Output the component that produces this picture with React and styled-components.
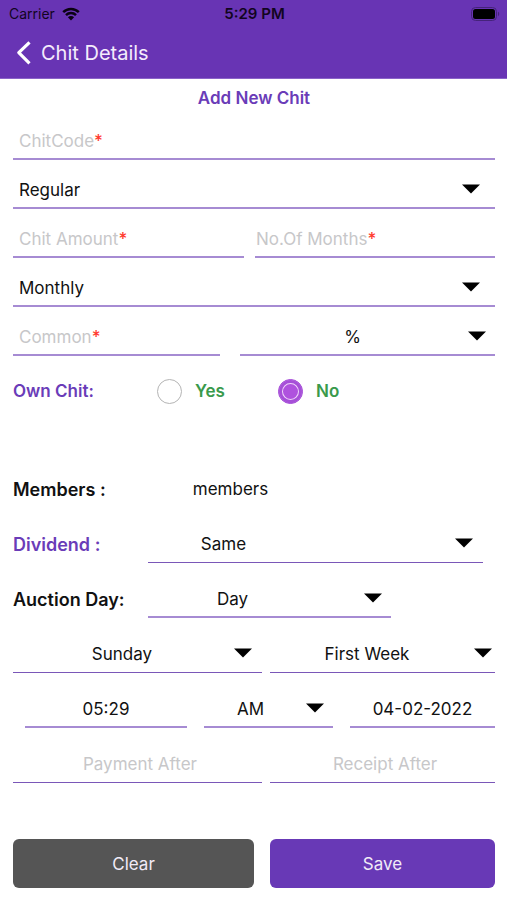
import React, { useState } from "react";
import styled, { createGlobalStyle } from "styled-components";

const initialState = {
  code: "",
  type: "Regular",
  amount: "",
  months: "",
  frequency: "Monthly",
  common: "",
  unit: "%",
  own: "No",
  members: "members",
  dividend: "Same",
  auction: "Day",
  weekday: "Sunday",
  week: "First Week",
  time: "05:29",
  meridiem: "AM",
  date: "04-02-2022",
  payment: "",
  receipt: "",
};

const options = {
  type: ["Regular", "Auction"],
  frequency: ["Monthly", "Weekly"],
  unit: ["%", "Rs"],
  dividend: ["Same", "Next"],
  auction: ["Day", "Date"],
  weekday: [
    "Sunday",
    "Monday",
    "Tuesday",
    "Wednesday",
    "Thursday",
    "Friday",
    "Saturday",
  ],
  week: ["First Week", "Second Week", "Third Week", "Fourth Week"],
  meridiem: ["AM", "PM"],
};

const RequiredInput = ({ id, label, value, onChange, inset = 6 }) => (
  <Field>
    <StyledInput
      id={id}
      name={id}
      value={value}
      onChange={onChange}
      placeholder=" "
      required
      $inset={inset}
    />
    <FloatingLabel htmlFor={id} $inset={inset}>
      {label}
      <Asterisk>*</Asterisk>
    </FloatingLabel>
  </Field>
);

const SelectField = ({ id, label, value, onChange, thin, center, space, arrow }) => (
  <Field $thin={thin}>
    <StyledSelect
      id={id}
      name={id}
      aria-label={label}
      value={value}
      onChange={onChange}
      $center={center}
      $space={space}
    >
      {options[id].map((item) => (
        <option key={item}>{item}</option>
      ))}
    </StyledSelect>
    <Arrow viewBox="0 0 18 9" $right={arrow} aria-hidden="true">
      <path d="M0 0h18L9 9z" />
    </Arrow>
  </Field>
);

export default function App() {
  const [state, setState] = useState(initialState);

  const handleChange = (e) => {
    setState({ ...state, [e.target.name]: e.target.value });
  };
  const handleClear = () => {
    setState(initialState);
  };
  const bind = (id) => ({
    id,
    name: id,
    value: state[id],
    onChange: handleChange,
  });

  return (
    <>
      <GlobalStyle />
      <StyledHeader>
        <StatusBar>
          <Carrier>
            Carrier
            <WifiIcon viewBox="0 0 18 14" aria-hidden="true">
              <path d="M1.2 5.2a11.2 11.2 0 0 1 15.6 0" />
              <path d="M4 8.1a7.2 7.2 0 0 1 10 0" />
              <path d="M9 13.4 5.9 10.2a4.4 4.4 0 0 1 6.2 0z" className="dot" />
            </WifiIcon>
          </Carrier>
          <Clock>5:29 PM</Clock>
          <BatteryIcon viewBox="0 0 29 14" aria-hidden="true">
            <rect x="0.5" y="0.5" width="25" height="13" rx="4" className="shell" />
            <rect x="2" y="2" width="22" height="10" rx="2.5" />
            <path d="M27 4.8c1.6.6 1.6 3.8 0 4.4z" className="cap" />
          </BatteryIcon>
        </StatusBar>
        <TitleBar>
          <BackButton type="button" aria-label="Back">
            <svg viewBox="0 0 15 24" width="15" height="24" aria-hidden="true">
              <path d="M13.5 1.3 2.8 11.7l10.7 10.6" />
            </svg>
          </BackButton>
          <PageTitle>Chit Details</PageTitle>
        </TitleBar>
      </StyledHeader>

      <StyledForm onSubmit={(e) => e.preventDefault()}>
        <FormTitle>Add New Chit</FormTitle>
        <FieldGroup $gap={11}>
          <RequiredInput label="ChitCode" {...bind("code")} />
          <SelectField label="Chit type" arrow={15} {...bind("type")} />
          <Row $cols="231fr 240fr" $gap={11}>
            <RequiredInput label="Chit Amount" {...bind("amount")} />
            <RequiredInput label="No.Of Months" inset={1} {...bind("months")} />
          </Row>
          <SelectField label="Frequency" arrow={15} {...bind("frequency")} />
          <Row $cols="207fr 255fr" $gap={20}>
            <RequiredInput label="Common" {...bind("common")} />
            <SelectField label="Unit" center space={30} arrow={9} {...bind("unit")} />
          </Row>
        </FieldGroup>

        <OwnRow role="radiogroup" aria-labelledby="own-label">
          <GroupLabel id="own-label">Own Chit:</GroupLabel>
          {["Yes", "No"].map((item) => (
            <RadioLabel key={item}>
              <StyledRadio
                type="radio"
                name="own"
                value={item}
                checked={state.own === item}
                onChange={handleChange}
              />
              {item}
            </RadioLabel>
          ))}
        </OwnRow>

        <FieldGroup $gap={17}>
          <Row $cols="135fr 165fr 182fr">
            <FieldLabel htmlFor="members">Members :</FieldLabel>
            <Field $bare>
              <StyledInput $center {...bind("members")} />
            </Field>
          </Row>
          <Row $cols="135fr 335fr 12fr">
            <FieldLabel htmlFor="dividend" $accent>
              Dividend :
            </FieldLabel>
            <SelectField thin center space={184} arrow={10} {...bind("dividend")} />
          </Row>
          <Row $cols="135fr 243fr 104fr">
            <FieldLabel htmlFor="auction">Auction Day:</FieldLabel>
            <SelectField center space={74} arrow={9} {...bind("auction")} />
          </Row>
          <Row $cols="249fr 225fr" $gap={8}>
            <SelectField label="Weekday" thin center space={31} arrow={10} {...bind("weekday")} />
            <SelectField label="Week" thin center space={31} arrow={3} {...bind("week")} />
          </Row>
          <TimeRow>
            <Field>
              <StyledInput aria-label="Time" $center {...bind("time")} />
            </Field>
            <SelectField label="AM or PM" center space={36} arrow={9} {...bind("meridiem")} />
            <Field>
              <StyledInput aria-label="Date" $center {...bind("date")} />
            </Field>
          </TimeRow>
          <Row $cols="249fr 225fr" $gap={8}>
            <Field $thin>
              <StyledInput
                aria-label="Payment After"
                placeholder="Payment After"
                $center
                $inset={11}
                {...bind("payment")}
              />
            </Field>
            <Field $thin>
              <StyledInput
                aria-label="Receipt After"
                placeholder="Receipt After"
                $center
                $inset={11}
                {...bind("receipt")}
              />
            </Field>
          </Row>
        </FieldGroup>

        <ButtonRow>
          <StyledButton type="button" $muted onClick={handleClear}>
            Clear
          </StyledButton>
          <StyledButton type="submit">Save</StyledButton>
        </ButtonRow>
      </StyledForm>
    </>
  );
}

const GlobalStyle = createGlobalStyle`
  * {
    box-sizing: border-box;
  }
  body {
    margin: 0;
    background: #fff;
    color: #111;
    font-family: Inter, "Liberation Sans", sans-serif;
    font-size: 17px;
  }
  input, select, button {
    font: inherit;
    color: inherit;
  }
`;

const StyledHeader = styled.header`
  background: #6834b4;
  border-bottom: 1px solid #8a63c8;
`;

const StatusBar = styled.div`
  display: grid;
  grid-template-columns: 1fr auto 1fr;
  align-items: center;
  height: 27px;
  padding: 0 7px 0 9px;
  color: #12051f;
  font-size: 14px;
`;

const Carrier = styled.span`
  display: flex;
  align-items: center;
  gap: 7px;
`;

const Clock = styled.span`
  font-size: 15px;
  font-weight: 600;
`;

const WifiIcon = styled.svg`
  width: 18px;
  height: 14px;
  fill: none;
  stroke: #0a0212;
  stroke-width: 2.5;

  .dot {
    fill: #0a0212;
    stroke: none;
  }
`;

const BatteryIcon = styled.svg`
  justify-self: end;
  width: 29px;
  height: 14px;
  fill: #000;

  .shell {
    fill: none;
    stroke: #45237a;
  }
  .cap {
    fill: #45237a;
  }
`;

const TitleBar = styled.div`
  display: flex;
  align-items: center;
  gap: 10px;
  height: 51px;
  padding-left: 16px;
  color: #f4ecfc;
`;

const BackButton = styled.button`
  display: flex;
  padding: 0;
  border: none;
  background: none;
  cursor: pointer;

  path {
    fill: none;
    stroke: #fff;
    stroke-width: 3.2;
    stroke-linejoin: round;
  }
`;

const PageTitle = styled.h1`
  margin: 0;
  font-size: 20px;
  font-weight: 400;
`;

const StyledForm = styled.form`
  padding: 0 12px 12px 13px;
`;

const FormTitle = styled.h2`
  margin: 0;
  padding: 8px 0 13px;
  color: #6a3cb8;
  font-size: 17px;
  font-weight: 600;
  line-height: 22px;
  text-align: center;
`;

const FieldGroup = styled.div`
  display: flex;
  flex-direction: column;
  gap: ${(props) => props.$gap}px;
`;

const Row = styled.div`
  display: grid;
  grid-template-columns: ${(props) => props.$cols};
  column-gap: ${(props) => props.$gap || 0}px;
  align-items: center;
`;

const TimeRow = styled(Row)`
  grid-template-columns: 162fr 129fr 145fr;
  column-gap: 17px;
  padding-left: 12px;
`;

const Field = styled.div`
  position: relative;
  display: flex;
  min-width: 0;
  height: 38px;
  padding-top: ${(props) => (props.$bare || props.$thin ? 0 : 2)}px;
  border-bottom: ${(props) =>
    props.$bare ? "none" : props.$thin ? "1px solid #7a57b8" : "2px solid #a68bd3"};
`;

const StyledInput = styled.input`
  width: 100%;
  min-width: 0;
  padding: 0 6px 0 ${(props) => props.$inset || 6}px;
  border: none;
  outline: none;
  background: none;
  text-align: ${(props) => (props.$center ? "center" : "left")};

  &::placeholder {
    color: #c7c7c9;
  }
`;

const FloatingLabel = styled.label`
  position: absolute;
  inset: 2px auto 0 ${(props) => props.$inset}px;
  display: flex;
  align-items: center;
  color: #c7c7c9;
  pointer-events: none;

  ${StyledInput}:not(:placeholder-shown) + & {
    display: none;
  }
`;

const Asterisk = styled.span`
  color: #ff3b30;
  font-weight: 500;
`;

const StyledSelect = styled.select`
  appearance: none;
  width: 100%;
  min-width: 0;
  padding: 0 ${(props) => props.$space || 6}px 0 ${(props) => (props.$center ? 0 : 6)}px;
  border: none;
  outline: none;
  background: none;
  text-align: ${(props) => (props.$center ? "center" : "left")};
  cursor: pointer;
`;

const Arrow = styled.svg`
  position: absolute;
  top: 13px;
  right: ${(props) => props.$right}px;
  width: 18px;
  height: 10px;
  fill: #000;
  pointer-events: none;
`;

const FieldLabel = styled.label`
  color: ${(props) => (props.$accent ? "#6a3cb8" : "#111")};
  font-size: 18px;
  font-weight: 600;
  white-space: nowrap;
`;

const OwnRow = styled.div`
  display: grid;
  grid-template-columns: 144fr 121fr 217fr;
  align-items: center;
  height: 38px;
  margin: 16px 0 60px;
`;

const GroupLabel = styled.span`
  color: #6a3cb8;
  font-weight: 600;
`;

const RadioLabel = styled.label`
  display: flex;
  align-items: center;
  gap: 13px;
  color: #3a9a4c;
  font-weight: 600;
  cursor: pointer;
`;

const StyledRadio = styled.input`
  appearance: none;
  width: 25px;
  height: 25px;
  margin: 0;
  border: 1px solid #b4b4b4;
  border-radius: 50%;
  cursor: pointer;

  &:checked {
    border-color: #a64fd8;
    background: #af52de;
    box-shadow: inset 0 0 0 3px #a64fd8, inset 0 0 0 4px #f0d6fa;
  }
`;

const ButtonRow = styled.div`
  display: grid;
  grid-template-columns: 241fr 225fr;
  gap: 16px;
  margin-top: 56px;
`;

const StyledButton = styled.button`
  height: 49px;
  border: none;
  border-radius: 6px;
  background: ${(props) => (props.$muted ? "#555555" : "#6839b6")};
  color: #f1ebf7;
  cursor: pointer;
`;
